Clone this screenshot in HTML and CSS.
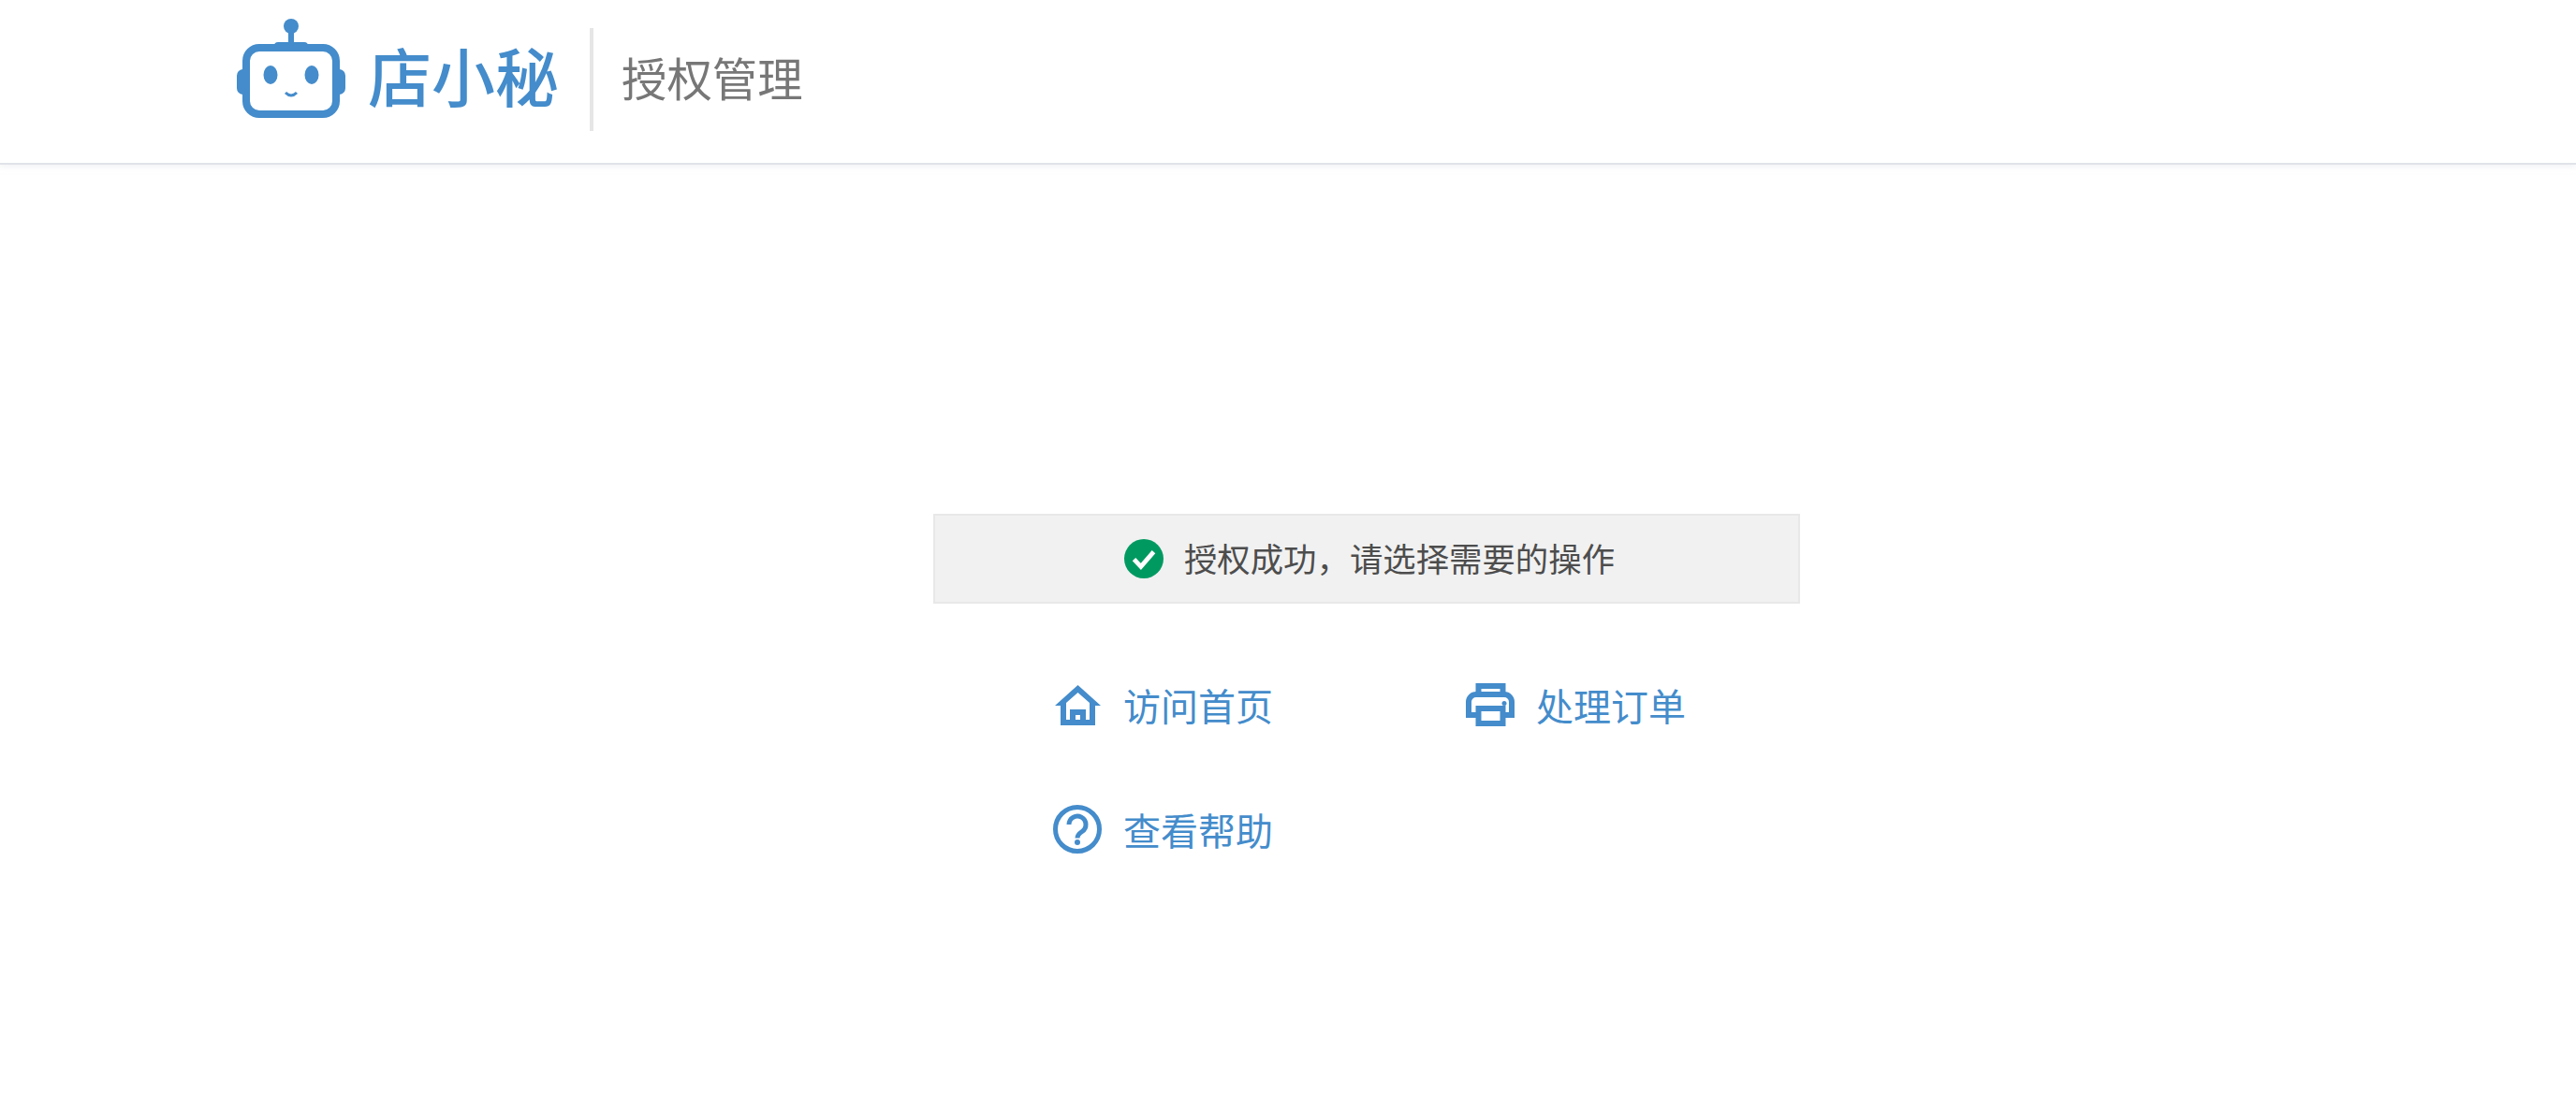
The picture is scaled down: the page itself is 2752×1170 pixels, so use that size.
FILE: index.html
```html
<!DOCTYPE html>
<html lang="zh-CN">
<head>
    <meta charset="UTF-8">
    <meta name="viewport" content="width=device-width, initial-scale=1.0">
    <title>授权管理</title>
    <link rel="stylesheet" href="styles.css">
</head>
<body>

    <header class="header">
        <svg class="robot" viewBox="0 0 116 106" aria-hidden="true">
            <circle cx="58" cy="8" r="8" fill="#448ccb"/>
            <rect x="55" y="12" width="6" height="18" fill="#448ccb"/>
            <rect x="40" y="25" width="36" height="8" rx="4" fill="#448ccb"/>
            <path d="M6 54a7 7 0 0 0-6 7v13a7 7 0 0 0 6 7zM110 54a7 7 0 0 1 6 7v13a7 7 0 0 1-6 7z" fill="#448ccb"/>
            <rect x="10" y="31" width="96" height="71" rx="14" fill="none" stroke="#448ccb" stroke-width="8"/>
            <ellipse cx="36" cy="60" rx="7.500" ry="10" fill="#448ccb"/>
            <ellipse cx="80" cy="60" rx="7.500" ry="10" fill="#448ccb"/>
            <path d="M52 79q6 6 12 0" fill="none" stroke="#448ccb" stroke-width="3"/>
        </svg>
        <span class="brand">店小秘</span>
        <span class="divider"></span>
        <h1 class="page-title">授权管理</h1>
    </header>

    <main class="main">
        <div class="notice">
            <svg class="notice-icon" viewBox="0 0 40 40" aria-hidden="true">
                <circle cx="20" cy="20" r="20" fill="#009a61"/>
                <path d="M10 20.500l7 7.500 13-15" fill="none" stroke="#fff" stroke-width="4.500"/>
            </svg>
            <span class="notice-text">授权成功，请选择需要的操作</span>
        </div>

        <div class="links">
            <a class="link" href="#">
                <span class="link-icon">
                    <svg width="49" height="43" viewBox="0 0 49 43" aria-hidden="true">
                        <path fill-rule="evenodd" fill="#448ccb" d="M24.500 0L49 22H43V43H6V22H0ZM24.500 8L12 19V37H16V26H33V37H37V19ZM22 32V37H27V32Z"/>
                    </svg>
                </span>
                访问首页
            </a>
            <a class="link" href="#">
                <span class="link-icon">
                    <svg width="52" height="46" viewBox="0 0 52 46" aria-hidden="true">
                        <g fill="none" stroke="#448ccb" stroke-width="6">
                            <path d="M13.500 12V3H39.500V12"/>
                            <path d="M11 34H3V20a8 8 0 0 1 8-8H41a8 8 0 0 1 8 8V34H41"/>
                            <rect x="13.500" y="27" width="26" height="16"/>
                        </g>
                        <circle cx="41" cy="21.500" r="2.500" fill="#448ccb"/>
                    </svg>
                </span>
                处理订单
            </a>
            <a class="link" href="#">
                <span class="link-icon">
                    <svg width="52" height="52" viewBox="0 0 52 52" aria-hidden="true">
                        <circle cx="26" cy="26" r="23.500" fill="none" stroke="#448ccb" stroke-width="5"/>
                        <path d="M17 21a9 9 0 1 1 14 7.500c-3 2-5 3.500-5 7" fill="none" stroke="#448ccb" stroke-width="5"/>
                        <circle cx="26" cy="40" r="3" fill="#448ccb"/>
                    </svg>
                </span>
                查看帮助
            </a>
        </div>
    </main>

</body>
</html>
```

FILE: styles.css
```css
body {
    margin: 0;
    background-color: #fff;
    font-family: "Noto Sans CJK SC", "Liberation Sans", sans-serif;
}

.header {
    display: flex;
    align-items: center;
    height: 174px;
    padding-left: 253px;
    border-bottom: 2px solid #e1e3ea;
    box-shadow: 0 2px 6px rgba(225, 228, 236, 0.5);
}

.robot {
    width: 116px;
    height: 106px;
    margin-top: -28px;
}

.brand {
    width: 237px;
    margin: -15px 0 0 24px;
    font-size: 68px;
    font-weight: 500;
    line-height: 68px;
    color: #448ccb;
}

.divider {
    width: 4px;
    height: 110px;
    margin-top: -4px;
    background: #e6e6e6;
}

.page-title {
    margin: -11px 0 0 30px;
    font-size: 48.400px;
    font-weight: 400;
    color: #777;
}

.main {
    width: 926px;
    margin: 373px 0 0 997px;
}

.notice {
    display: flex;
    align-items: center;
    justify-content: center;
    height: 92px;
    padding-left: 6px;
    background: #f1f1f1;
    border: 2px solid #e8e8e8;
    font-size: 35.400px;
    color: #4d4d4d;
}

.notice-icon {
    width: 42px;
    height: 42px;
    margin-right: 22px;
}

.notice-text {
    margin-top: -3px;
}

.links {
    display: grid;
    grid-template-columns: 441px 1fr;
    grid-auto-rows: 133px;
    padding: 68px 0 0 128px;
}

.link {
    display: flex;
    align-items: center;
    height: 80px;
    font-size: 40px;
    color: #448ccb;
    text-decoration: none;
}

.link-icon {
    display: flex;
    justify-content: center;
    width: 52px;
    margin-right: 23px;
}
```
